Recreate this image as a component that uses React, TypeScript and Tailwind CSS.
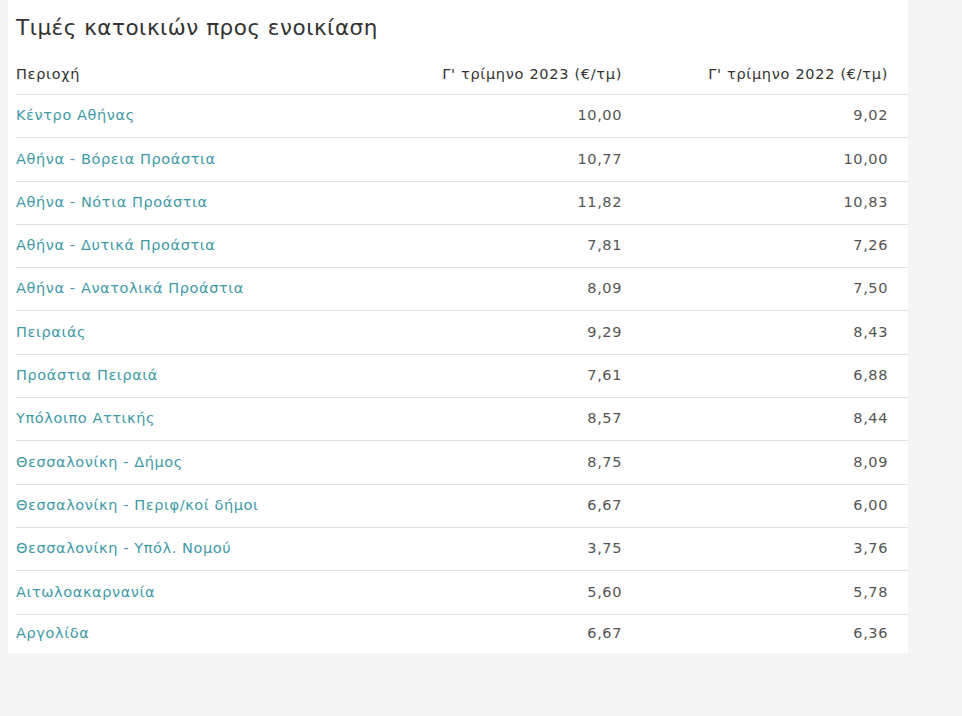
const rows: [string, string, string][] = [
  ["Κέντρο Αθήνας", "10,00", "9,02"],
  ["Αθήνα - Βόρεια Προάστια", "10,77", "10,00"],
  ["Αθήνα - Νότια Προάστια", "11,82", "10,83"],
  ["Αθήνα - Δυτικά Προάστια", "7,81", "7,26"],
  ["Αθήνα - Ανατολικά Προάστια", "8,09", "7,50"],
  ["Πειραιάς", "9,29", "8,43"],
  ["Προάστια Πειραιά", "7,61", "6,88"],
  ["Υπόλοιπο Αττικής", "8,57", "8,44"],
  ["Θεσσαλονίκη - Δήμος", "8,75", "8,09"],
  ["Θεσσαλονίκη - Περιφ/κοί δήμοι", "6,67", "6,00"],
  ["Θεσσαλονίκη - Υπόλ. Νομού", "3,75", "3,76"],
  ["Αιτωλοακαρνανία", "5,60", "5,78"],
  ["Αργολίδα", "6,67", "6,36"],
];

export default function App() {
  return (
    <div className="min-h-[716px] bg-[#f5f5f5] pl-2 font-['DejaVu_Sans',sans-serif]">
      <div className="w-[900px] bg-white pl-2">
        <h2 className="pt-[14px] pb-[14px] text-[21.5px] leading-[28px] tracking-[0.5px] text-[#333]">
          Τιμές κατοικιών προς ενοικίαση
        </h2>
        <div className="grid grid-cols-[1fr_266px_266px] border-b border-[#e2e2e2] text-[14.5px] tracking-[0.7px] text-[#333] h-[39px] items-center">
          <span>Περιοχή</span>
          <span className="text-right pr-5">Γ' τρίμηνο 2023 (€/τμ)</span>
          <span className="text-right pr-5">Γ' τρίμηνο 2022 (€/τμ)</span>
        </div>
        {rows.map(([area, a, b], i) => (
          <div
            key={area}
            className={
              "grid grid-cols-[1fr_266px_266px] items-center text-[14.5px] tracking-[0.6px] " +
              (i < rows.length - 1 ? "h-[43.3px] border-b border-[#e2e2e2]" : "h-[38.5px]")
            }
          >
            <span className="text-[#3f9aa6]">{area}</span>
            <span className="text-right pr-5 text-[#555]">{a}</span>
            <span className="text-right pr-5 text-[#555]">{b}</span>
          </div>
        ))}
      </div>
    </div>
  );
}
